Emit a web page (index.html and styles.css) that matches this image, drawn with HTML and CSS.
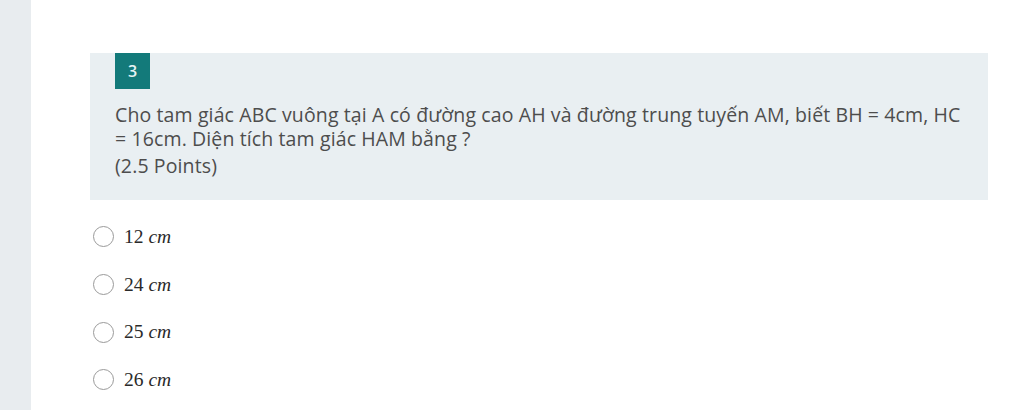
FILE: index.html
```html
<!DOCTYPE html>
<html lang="vi">
<head>
<meta charset="utf-8">
<link rel="stylesheet" href="styles.css">
</head>
<body>
<div class="page">
  <aside class="side"></aside>
  <main class="main">
    <section class="question">
      <div class="badge">3</div>
      <div class="qtext">Cho tam giác ABC vuông tại A có đường cao AH và đường trung tuyến AM, biết BH = 4cm, HC = 16cm. Diện tích tam giác HAM bằng ?</div>
      <div class="points">(2.5 Points)</div>
    </section>
    <ul class="options">
      <li class="opt"><span class="radio"></span><span class="val">12 <i>cm</i></span></li>
      <li class="opt"><span class="radio"></span><span class="val">24 <i>cm</i></span></li>
      <li class="opt"><span class="radio"></span><span class="val">25 <i>cm</i></span></li>
      <li class="opt"><span class="radio"></span><span class="val">26 <i>cm</i></span></li>
    </ul>
  </main>
</div>
</body>
</html>
```
FILE: styles.css
```css
html, body { margin: 0; padding: 0; background: #fff; }
body { font-family: "Open Sans", "Noto Sans", sans-serif; color: #444; }
.page { display: flex; height: 410px; overflow: hidden; }
.side { width: 31px; flex: none; background: #e8ecef; }
.main { flex: 1; padding: 53px 0 0 59px; }
.question {
  width: 898px;
  box-sizing: border-box;
  background: #e9eff2;
  padding: 0 22px 0 25px;
  height: 147px;
}
.badge {
  width: 35px; height: 36px;
  background: #137a7a;
  color: #e6f4f4;
  font-size: 16px; font-weight: 600;
  display: flex; align-items: center; justify-content: center;
}
.qtext { margin-top: 14px; font-size: 19.5px; line-height: 24px; color: #4d4d4d; letter-spacing: 0.12px; }
.points { font-size: 19.5px; line-height: 24px; margin-top: 3px; color: #4d4d4d; letter-spacing: 0.12px; }
.options { list-style: none; margin: 13px 0 0 3px; padding: 0; }
.opt { display: flex; align-items: center; height: 47.7px; }
.radio {
  border: 1.5px solid #9a9a9a; border-radius: 50%;
  box-sizing: border-box; width: 21px; height: 21px; margin-right: 10px; background: #fff;
}
.val { font-family: "Liberation Serif", serif; font-size: 19.5px; color: #2a2a2a; }
.val i { font-style: italic; }
```
